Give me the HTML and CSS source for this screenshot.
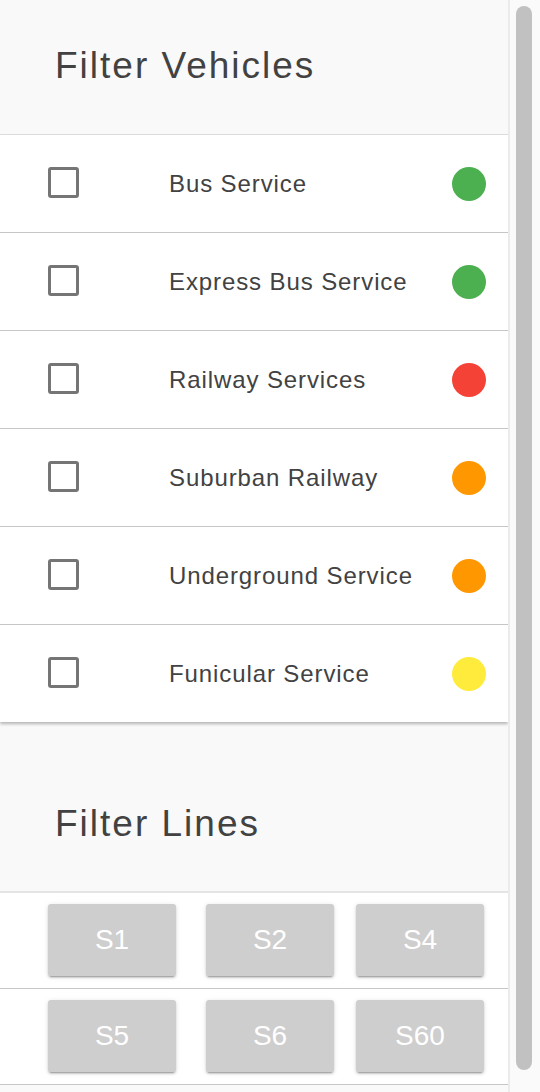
FILE: index.html
```html
<!DOCTYPE html>
<html lang="en">
<head>
<meta charset="utf-8">
<title>Filters</title>
<link rel="stylesheet" href="styles.css">
</head>
<body>
<div class="page">
  <main class="panel">
    <section class="section">
      <header class="section-head"><h2 class="section-title">Filter Vehicles</h2></header>
      <ul class="card vehicle-list">
        <li class="vehicle-row"><span class="checkbox"></span><span class="vehicle-name">Bus Service</span><span class="dot dot-green"></span></li>
        <li class="vehicle-row"><span class="checkbox"></span><span class="vehicle-name">Express Bus Service</span><span class="dot dot-green"></span></li>
        <li class="vehicle-row"><span class="checkbox"></span><span class="vehicle-name">Railway Services</span><span class="dot dot-red"></span></li>
        <li class="vehicle-row"><span class="checkbox"></span><span class="vehicle-name">Suburban Railway</span><span class="dot dot-orange"></span></li>
        <li class="vehicle-row"><span class="checkbox"></span><span class="vehicle-name">Underground Service</span><span class="dot dot-orange"></span></li>
        <li class="vehicle-row"><span class="checkbox"></span><span class="vehicle-name">Funicular Service</span><span class="dot dot-yellow"></span></li>
      </ul>
    </section>
    <section class="section section-lines">
      <header class="section-head"><h2 class="section-title">Filter Lines</h2></header>
      <div class="lines">
        <div class="lines-row"><button class="line-btn">S1</button><button class="line-btn">S2</button><button class="line-btn">S4</button></div>
        <div class="lines-row"><button class="line-btn">S5</button><button class="line-btn">S6</button><button class="line-btn">S60</button></div>
      </div>
    </section>
  </main>
  <div class="scrollbar"><div class="scroll-thumb"></div></div>
</div>
</body>
</html>
```
FILE: styles.css
```css
html, body {
  margin: 0;
  padding: 0;
  height: 1092px;
  overflow: hidden;
}
body {
  font-family: "Liberation Sans", Arial, Helvetica, sans-serif;
  color: #424242;
  background: #f9f9f9;
}
.page {
  display: flex;
  height: 1092px;
}
.panel {
  flex: 0 0 508px;
  width: 508px;
  background: #f9f9f9;
  overflow: hidden;
}
.section-head {
  height: 135px;
  box-sizing: border-box;
  padding: 48px 0 0 55px;
  border-bottom: 1px solid #dedede;
}
.section-title {
  margin: 0;
  font-size: 37px;
  line-height: 36px;
  font-weight: normal;
  letter-spacing: 2px;
  color: #424242;
}
.card {
  background: #fff;
}
.vehicle-list {
  list-style: none;
  margin: 0;
  padding: 0;
  box-shadow: 0 2px 3px rgba(0,0,0,0.28);
}
.vehicle-row {
  display: flex;
  align-items: center;
  height: 97px;
  border-bottom: 1px solid #c6c6c6;
  padding: 0 22px 0 48px;
}
.vehicle-row:last-child {
  border-bottom: 0;
}
.checkbox {
  flex: 0 0 auto;
  width: 31px;
  height: 31px;
  box-sizing: border-box;
  border: 3px solid #757575;
  border-radius: 3px;
  margin-top: -3px;
}
.vehicle-name {
  flex: 1 1 auto;
  margin-left: 90px;
  font-size: 24px;
  letter-spacing: 0.9px;
  color: #424242;
}
.dot {
  flex: 0 0 auto;
  width: 34px;
  height: 34px;
  border-radius: 50%;
}
.dot-green { background: #4caf50; }
.dot-red { background: #f44336; }
.dot-orange { background: #ff9800; }
.dot-yellow { background: #ffeb3b; }

.section-lines {
  margin-top: 36px;
}
.section-lines .section-head {
  border-bottom: 2px solid #e4e4e4;
}
.lines {
  background: #fff;
}
.lines-row {
  display: flex;
  padding: 11px 0 12px 48px;
  border-bottom: 1px solid #c6c6c6;
}
.line-btn {
  width: 128px;
  height: 72px;
  border: 0;
  border-radius: 3px;
  background: #cecece;
  color: #fff;
  font-family: "Liberation Sans", Arial, Helvetica, sans-serif;
  font-size: 28px;
  padding: 0;
  box-shadow: 0 2px 2px rgba(0,0,0,0.14), 0 3px 1px -2px rgba(0,0,0,0.2), 0 1px 5px rgba(0,0,0,0.12);
}
.line-btn:nth-child(2) { margin-left: 30px; }
.line-btn:nth-child(3) { margin-left: 22px; }

.scrollbar {
  flex: 0 0 32px;
  box-sizing: border-box;
  border-left: 2px solid #ebebeb;
  background: #fafafa;
  padding: 6px 0 22px 6px;
}
.scroll-thumb {
  width: 16px;
  height: 100%;
  border-radius: 8px;
  background: #c1c1c1;
}
```
